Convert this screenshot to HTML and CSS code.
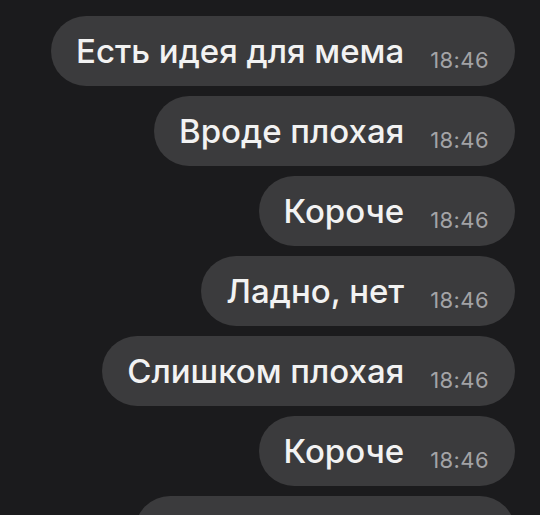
FILE: index.html
```html
<!DOCTYPE html>
<html lang="ru">
<head>
    <meta charset="UTF-8">
    <meta name="viewport" content="width=device-width, initial-scale=1.0">
    <title>Чат</title>
    <link rel="stylesheet" href="styles.css">
</head>
<body>
    <div class="chat">
        <div class="bubble"><span class="text">Есть идея для мема</span><span class="time">18:46</span></div>
        <div class="bubble"><span class="text">Вроде плохая</span><span class="time">18:46</span></div>
        <div class="bubble"><span class="text">Короче</span><span class="time">18:46</span></div>
        <div class="bubble"><span class="text">Ладно, нет</span><span class="time">18:46</span></div>
        <div class="bubble"><span class="text">Слишком плохая</span><span class="time">18:46</span></div>
        <div class="bubble"><span class="text">Короче</span><span class="time">18:46</span></div>
        <div class="bubble bubble-next"></div>
    </div>
</body>
</html>
```

FILE: styles.css
```css
body {
    margin: 0;
    padding: 0;
    background-color: #1b1b1d;
    font-family: Inter, "Noto Sans", sans-serif;
    overflow: hidden;
}

.chat {
    display: flex;
    flex-direction: column;
    align-items: flex-end;
    gap: 10px;
    padding: 16px 25px 0 0;
}

.bubble {
    height: 70px;
    line-height: 70px;
    padding: 0 26px 0 25px;
    border-radius: 35px;
    background-color: #3b3b3d;
    white-space: nowrap;
}

/* next message, only its top edge is on screen */
.bubble-next {
    width: 329px;
}

.text {
    color: #f2f2f2;
    font-size: 33px;
    font-weight: 500;
    margin-right: 26px;
}

.time {
    color: #a3a3a6;
    font-size: 22px;
    letter-spacing: 0.4px;
    vertical-align: -5px;
}
```
